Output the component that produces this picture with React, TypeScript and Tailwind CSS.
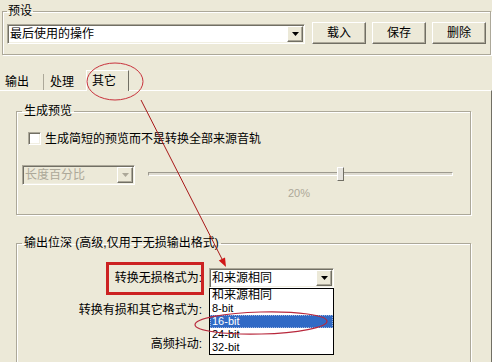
import React from "react";

const etched = "border border-[#aca899] shadow-[inset_1px_1px_0_#fff,1px_1px_0_#fff]";
const sunken = "border border-t-[#aca899] border-l-[#aca899] border-b-white border-r-white shadow-[inset_1px_1px_0_#716f64,inset_-1px_-1px_0_#f1efe2]";
const raised = "border border-t-white border-l-white border-b-[#716f64] border-r-[#716f64] shadow-[inset_-1px_-1px_0_#aca899]";

function Arrow({ color = "#000" }: { color?: string }) {
  return (
    <svg width="7" height="4" viewBox="0 0 7 4">
      <path d="M0 0h7L3.5 4z" fill={color} />
    </svg>
  );
}

function Combo({ text, className, disabled }: { text: string; className: string; disabled?: boolean }) {
  return (
    <div className={`flex items-center h-[20px] p-[1px] ${sunken} ${disabled ? "bg-[#ece9d8] text-[#aca899]" : "bg-white"} ${className}`}>
      <span className="flex-1 pl-[1px] whitespace-nowrap overflow-hidden leading-[16px]">{text}</span>
      <span className={`flex items-center justify-center w-[16px] h-[16px] bg-[#ece9d8] ${raised}`}>
        <Arrow color={disabled ? "#aca899" : "#000"} />
      </span>
    </div>
  );
}

function Btn({ children }: { children: React.ReactNode }) {
  return (
    <div className={`flex items-center justify-center w-[54px] h-[22px] bg-[#ece9d8] ${raised}`}>{children}</div>
  );
}

const bits = ["和来源相同", "8-bit", "16-bit", "24-bit", "32-bit"];

export default function App() {
  return (
    <div className="relative w-[492px] h-[362px] overflow-hidden bg-[#ece9d8] text-black text-[12px] leading-[14px] font-['Liberation_Sans','Noto_Sans_CJK_SC',sans-serif]">
      {/* preset */}
      <div className="pt-[4px] px-[2px]">
        <fieldset className={`${etched} px-[4px] pb-[10px]`}>
          <legend className="px-[1px]">预设</legend>
          <div className="flex items-end mt-[4px]">
            <Combo text="最后使用的操作" className="w-[298px]" />
            <div className="flex gap-[6px] ml-[7px]">
              <Btn>载入</Btn>
              <Btn>保存</Btn>
              <Btn>删除</Btn>
            </div>
          </div>
        </fieldset>
      </div>

      {/* tabs */}
      <div className="flex items-end h-[20px] mt-[15px]">
        <div className="w-[44px] h-[16px] pl-[5px] border-r border-[#aca899] leading-[16px]">输出</div>
        <div className="w-[42px] h-[16px] pl-[6px] leading-[16px]">处理</div>
        <div className="relative z-10 -mb-px w-[43px] h-[21px] pl-[5px] pt-[3px] bg-[#ece9d8] border-t border-l border-white border-r border-r-[#716f64]">其它</div>
      </div>

      <div className="h-[272px] pt-[13px] pl-[16px] pr-[20px] border-t border-white border-r border-r-[#716f64]">
        <fieldset className={`${etched} pb-[15px]`}>
          <legend className="ml-[5px] px-[2px]">生成预览</legend>
          <div className="flex items-center gap-[4px] pl-[11px] mt-[14px] h-[13px]">
            <span className={`w-[13px] h-[13px] bg-white ${sunken}`} />
            <span className="whitespace-nowrap">生成简短的预览而不是转换全部来源音轨</span>
          </div>
          <div className="flex items-start pl-[5px] mt-[20px]">
            <Combo text="长度百分比" className="w-[113px]" disabled />
            <div className="ml-[13px] w-[305px] flex flex-col">
              <div className="relative h-[20px]">
                <div className="mt-[7px] h-[4px] border-t border-l border-[#9d9a8f] border-b border-r border-b-white border-r-white bg-[#dedbd0]" />
                <div className="absolute left-[189px] top-[2px] w-[7px] h-[14px] bg-[#e4e2dc] border border-t-white border-l-white border-b-[#716f64] border-r-[#716f64]" />
              </div>
              <div className="ml-[140px] mt-[2px] text-[11px] leading-[12px] text-[#aca899]">20%</div>
            </div>
          </div>
        </fieldset>

        <fieldset className={`${etched} mt-[21px] pb-[40px]`}>
          <legend className="ml-[5px] px-[2px] whitespace-nowrap">输出位深 (高级,仅用于无损输出格式)</legend>
          <div className="flex items-center mt-[18px] h-[20px]">
            <div className="w-[185px] text-right">转换无损格式为:</div>
            <div className="relative ml-[7px]">
              <Combo text="和来源相同" className="w-[125px]" />
              <div className="absolute z-10 top-full left-0 w-[125px] border border-black bg-white">
                {bits.map(b => (
                  <div
                    key={b}
                    className={`h-[13px] pl-[2px] whitespace-nowrap ${b === "和来源相同" ? "text-[12px] leading-[13px]" : "text-[11px] leading-[13px]"} ${b === "16-bit" ? "bg-[#316ac5] text-white outline outline-1 outline-dotted outline-[#9fb7e0] -outline-offset-1" : ""}`}
                  >
                    {b}
                  </div>
                ))}
              </div>
            </div>
          </div>
          <div className="flex items-center mt-[12px] h-[20px]">
            <div className="w-[185px] text-right">转换有损和其它格式为:</div>
          </div>
          <div className="flex items-center mt-[14px] h-[20px]">
            <div className="w-[185px] text-right">高频抖动:</div>
          </div>
        </fieldset>
      </div>

      {/* annotations */}
      <svg className="absolute inset-0 z-20 pointer-events-none" width="492" height="362" viewBox="0 0 492 362">
        <ellipse cx="115" cy="81.5" rx="28" ry="18.5" fill="none" stroke="#c8323c" strokeWidth="1" />
        <line x1="141" y1="100" x2="223" y2="261" stroke="#a81818" strokeWidth="1" />
        <polygon points="226,267 218.8,260.6 225,257.4" fill="#d01818" />
        <rect x="107.5" y="263.5" width="95" height="30" fill="none" stroke="#cc2222" strokeWidth="3" />
        <ellipse cx="261" cy="323" rx="66" ry="11" fill="none" stroke="#b8283c" strokeWidth="1.2" transform="rotate(-1.5 261 323)" />
      </svg>
    </div>
  );
}
